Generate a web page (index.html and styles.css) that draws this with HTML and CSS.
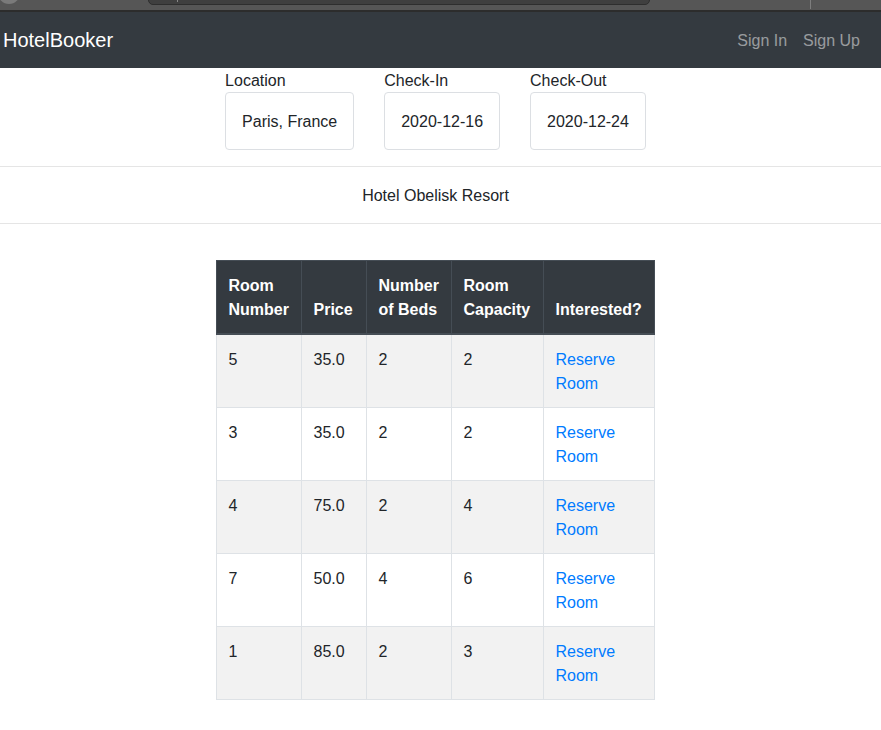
FILE: index.html
```html
<!DOCTYPE html>
<html lang="en">
<head>
<meta charset="utf-8">
<title>HotelBooker</title>
<link rel="stylesheet" href="styles.css">
</head>
<body>
<div class="chrome">
  <div class="chrome-circle"></div>
  <div class="chrome-address"><span class="chrome-caret"></span></div>
  <div class="chrome-sep"></div>
</div>
<nav class="navbar">
  <a class="brand" href="#">HotelBooker</a>
  <div class="nav-links">
    <a class="nav-link" href="#">Sign In</a>
    <a class="nav-link" href="#">Sign Up</a>
  </div>
</nav>
<main class="page">
  <div class="search">
    <div class="field">
      <label class="field-label">Location</label>
      <div class="field-box">Paris, France</div>
    </div>
    <div class="field">
      <label class="field-label">Check-In</label>
      <div class="field-box">2020-12-16</div>
    </div>
    <div class="field">
      <label class="field-label">Check-Out</label>
      <div class="field-box">2020-12-24</div>
    </div>
  </div>
  <hr class="rule">
  <div class="hotel-name">Hotel Obelisk Resort</div>
  <hr class="rule">
  <div class="table-wrap">
    <table class="rooms">
      <colgroup>
        <col class="c1"><col class="c2"><col class="c3"><col class="c4"><col class="c5">
      </colgroup>
      <thead>
        <tr>
          <th>Room Number</th>
          <th>Price</th>
          <th>Number of Beds</th>
          <th>Room Capacity</th>
          <th>Interested?</th>
        </tr>
      </thead>
      <tbody>
        <tr><td>5</td><td>35.0</td><td>2</td><td>2</td><td><a href="#">Reserve Room</a></td></tr>
        <tr><td>3</td><td>35.0</td><td>2</td><td>2</td><td><a href="#">Reserve Room</a></td></tr>
        <tr><td>4</td><td>75.0</td><td>2</td><td>4</td><td><a href="#">Reserve Room</a></td></tr>
        <tr><td>7</td><td>50.0</td><td>4</td><td>6</td><td><a href="#">Reserve Room</a></td></tr>
        <tr><td>1</td><td>85.0</td><td>2</td><td>3</td><td><a href="#">Reserve Room</a></td></tr>
      </tbody>
    </table>
  </div>
</main>
</body>
</html>
```
FILE: styles.css
```css
* { box-sizing: border-box; }
html, body { margin: 0; padding: 0; }
body {
  font-family: "Liberation Sans", Arial, sans-serif;
  font-size: 16px;
  line-height: 24px;
  color: #212529;
  background: #fff;
}
a { text-decoration: none; }

.chrome {
  height: 12px;
  background: #565656;
  border-bottom: 2px solid #2c2c2c;
  display: flex;
  align-items: flex-end;
  overflow: hidden;
}
.chrome-circle {
  width: 22px;
  height: 22px;
  border-radius: 50%;
  background: #7a7a7a;
  margin: 0 0 6px -2px;
  flex: none;
}
.chrome-address {
  width: 502px;
  height: 20px;
  margin: 0 0 5px 128px;
  background: #3f3f3f;
  border: 1px solid #2e2e2e;
  border-radius: 5px;
  flex: none;
  display: flex;
  align-items: flex-end;
}
.chrome-caret {
  width: 1px;
  height: 6px;
  background: #888;
  margin: 0 0 2px 28px;
}
.chrome-sep {
  width: 1px;
  height: 9px;
  background: #7e7e7e;
  margin: 0 0 3px 160px;
  align-self: flex-start;
}

.navbar {
  height: 56px;
  background: #343a40;
  display: flex;
  align-items: center;
  justify-content: space-between;
  padding: 0 13px 0 3px;
}
.brand {
  color: #fff;
  font-size: 20px;
  line-height: 30px;
}
.nav-links { display: flex; }
.nav-link {
  color: rgba(255, 255, 255, 0.5);
  padding: 9px 8px 7px;
  line-height: 24px;
}

.page { padding-right: 10px; }

.search {
  display: flex;
  justify-content: center;
  gap: 30px;
}
.field { display: flex; flex-direction: column; }
.field-label {
  height: 24px;
  line-height: 26px;
}
.field-box {
  height: 58px;
  padding: 2px 16px 0;
  border: 1px solid #dcdfe3;
  border-radius: 4px;
  display: flex;
  align-items: center;
  justify-content: center;
}

.rule {
  margin: 16px -10px 16px 0;
  border: 0;
  border-top: 1px solid rgba(0, 0, 0, 0.1);
  height: 0;
}
.hotel-name {
  text-align: center;
  height: 24px;
  line-height: 26px;
}

.table-wrap {
  display: flex;
  justify-content: center;
  padding-top: 20px;
}
.rooms {
  border-collapse: collapse;
  table-layout: fixed;
  width: 438px;
  margin-right: 1px;
}
.c1 { width: 85px; }
.c2 { width: 65px; }
.c3 { width: 85px; }
.c4 { width: 92px; }
.c5 { width: 111px; }
.rooms th, .rooms td {
  padding: 13px 12px 11px;
  text-align: left;
  vertical-align: top;
  line-height: 24px;
}
.rooms th {
  background: #343a40;
  color: #fff;
  font-weight: bold;
  vertical-align: bottom;
  border: 1px solid #454d55;
  border-bottom-width: 2px;
}
.rooms td { border: 1px solid #dee2e6; }
.rooms tbody tr:nth-child(odd) td { background: #f2f2f2; }
.rooms td a { color: #007bff; }
```
